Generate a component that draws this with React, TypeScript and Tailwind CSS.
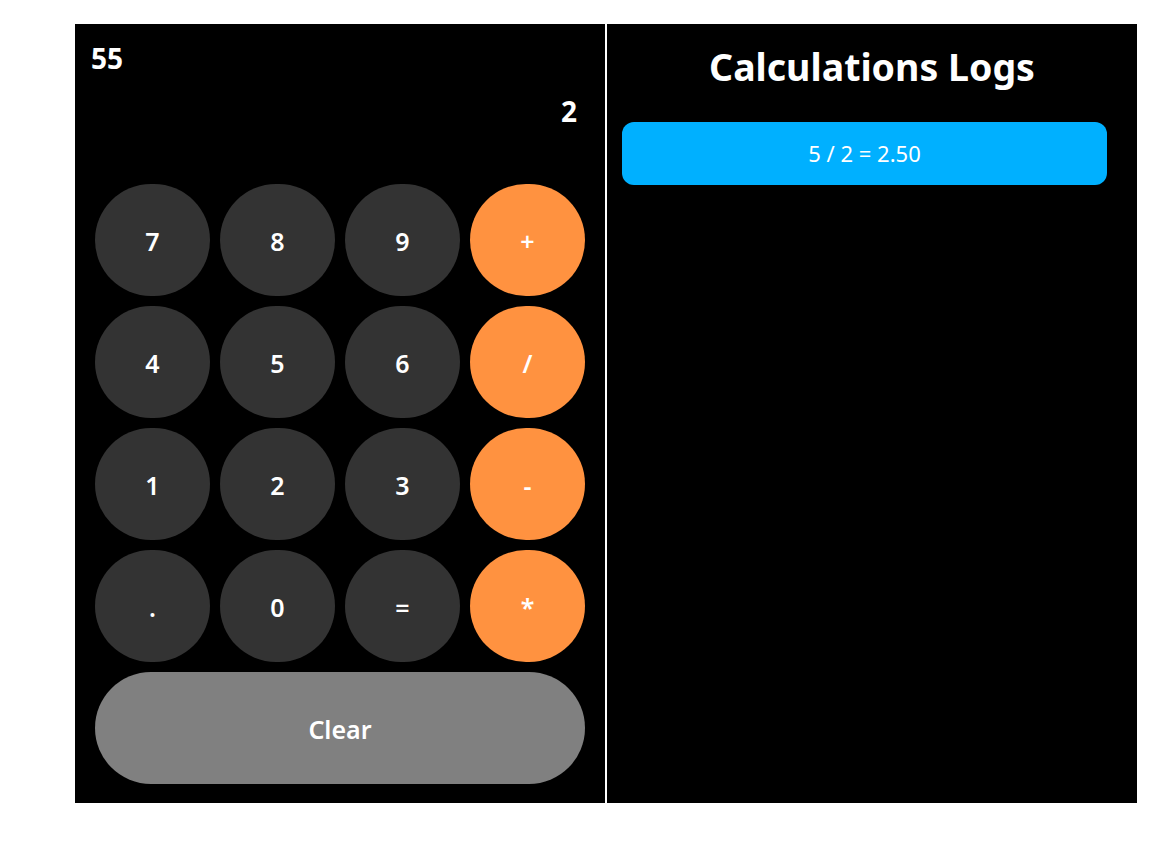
import React from 'react';

const rows = [
  ['7', '8', '9', '+'],
  ['4', '5', '6', '/'],
  ['1', '2', '3', '-'],
  ['.', '0', '=', '*'],
];

const ops = ['+', '/', '-', '*'];

export default function App() {
  return (
    <div className="min-h-[846px] bg-white pt-6 pl-[75px] font-['Noto_Sans',sans-serif]">
      <div className="flex w-[1062px] gap-[2px]">
        {/* Calculator */}
        <div className="flex h-[779px] w-[530px] flex-col bg-black px-5 pb-[19px]">
          <div className="-ml-1 pt-[17px] text-[28px] font-bold leading-[34px] text-white">55</div>
          <div className="mt-[19px] pr-[8px] text-right text-[28px] font-bold leading-[34px] text-white">2</div>
          <div className="mt-auto grid grid-cols-4 gap-[10px]">
            {rows.flat().map((k) => (
              <button
                key={k}
                className={`flex h-[112px] w-[115px] items-center justify-center rounded-full pt-1 text-[25px] font-semibold text-white ${
                  ops.includes(k) ? 'bg-[#ff9240]' : 'bg-[#333333]'
                }`}
              >
                {k}
              </button>
            ))}
            <button className="col-span-4 h-[112px] rounded-full bg-[#808080] pt-1 text-[25px] font-semibold text-white">
              Clear
            </button>
          </div>
        </div>

        {/* Logs */}
        <div className="h-[779px] w-[530px] bg-black pl-[15px] pr-[30px]">
          <h2 className="pt-[18px] pl-[15px] text-center text-[37.5px] font-bold leading-[50px] text-white">
            Calculations Logs
          </h2>
          <div className="mt-[30px] flex h-[63px] items-center justify-center rounded-xl bg-[#00b0ff] text-[22px] text-white">
            5 / 2 = 2.50
          </div>
        </div>
      </div>
    </div>
  );
}
